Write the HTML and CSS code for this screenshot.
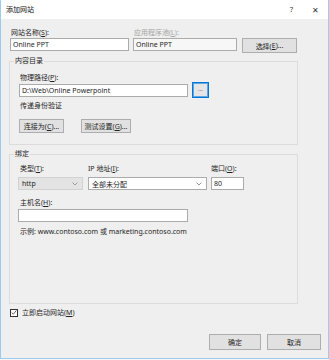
FILE: index.html
```html
<!DOCTYPE html>
<html lang="zh">
<head>
<meta charset="utf-8">
<title>添加网站</title>
<link rel="stylesheet" href="styles.css">
</head>
<body>
<div class="win">
  <div class="titlebar">
    <span class="title">添加网站</span>
    <span class="ctrls"><span class="help">?</span><span class="close">✕</span></span>
  </div>
  <div class="body">
    <div class="row1">
      <div class="field">
        <div class="lbl">网站名称(<u>S</u>):</div>
        <div class="input w-name">Online PPT</div>
      </div>
      <div class="field">
        <div class="lbl dis">应用程序池(<u>L</u>):</div>
        <div class="input ro w-pool">Online PPT</div>
      </div>
      <div class="btn b-select">选择(<u>E</u>)...</div>
    </div>

    <fieldset class="grp g1">
      <legend>内容目录</legend>
      <div class="lbl">物理路径(<u>P</u>):</div>
      <div class="pathrow">
        <div class="input w-path">D:\Web\Online Powerpoint</div>
        <div class="btn b-dots">...</div>
      </div>
      <div class="lbl l-auth">传递身份验证</div>
      <div class="btnrow">
        <div class="btn b-conn">连接为(<u>C</u>)...</div>
        <div class="btn b-test">测试设置(<u>G</u>)...</div>
      </div>
    </fieldset>

    <fieldset class="grp g2">
      <legend>绑定</legend>
      <div class="bindrow">
        <div class="field f-type">
          <div class="lbl">类型(<u>T</u>):</div>
          <div class="select s-type"><span>http</span><svg width="6" height="4" viewBox="0 0 6 4"><path d="M0.5 0.5 L3 3 L5.5 0.5" fill="none" stroke="#8a8a8a" stroke-width="0.8"/></svg></div>
        </div>
        <div class="field f-ip">
          <div class="lbl">IP 地址(<u>I</u>):</div>
          <div class="select s-ip"><span>全部未分配</span><svg width="6" height="4" viewBox="0 0 6 4"><path d="M0.5 0.5 L3 3 L5.5 0.5" fill="none" stroke="#7a7a7a" stroke-width="0.8"/></svg></div>
        </div>
        <div class="field f-port">
          <div class="lbl">端口(<u>O</u>):</div>
          <div class="input w-port">80</div>
        </div>
      </div>
      <div class="lbl l-host">主机名(<u>H</u>):</div>
      <div class="input w-host"></div>
      <div class="lbl l-ex">示例: www.contoso.com 或 marketing.contoso.com</div>
    </fieldset>

    <div class="chkrow">
      <span class="chk"><svg width="7" height="7" viewBox="0 0 7 7"><path d="M0.8 3.6 L2.7 5.5 L6.2 1.2" fill="none" stroke="#333" stroke-width="0.9"/></svg></span>
      <span class="lbl">立即启动网站(<u>M</u>)</span>
    </div>

    <div class="footer">
      <div class="btn b-ok">确定</div>
      <div class="btn b-cancel">取消</div>
    </div>
  </div>
</div>
</body>
</html>
```

FILE: styles.css
```css
* { box-sizing: border-box; }
html, body { margin: 0; padding: 0; }
body {
  background: #f4f6f8;
  font-family: "Noto Sans", "Noto Sans CJK SC", sans-serif;
  font-size: 7px;
  color: #1e1e1e;
}
u { text-decoration: underline; text-underline-offset: 1px; }

.win {
  width: 329px;
  height: 359px;
  background: #efefef;
  border-left: 1px solid #9ccbee;
  border-right: 1px solid #9ccbee;
  border-bottom: 1px solid #9ccbee;
  display: flex;
  flex-direction: column;
}

.titlebar {
  height: 19px;
  background: #ffffff;
  display: flex;
  align-items: center;
  justify-content: space-between;
  padding: 0 9px 0 5px;
  flex: none;
}
.title { font-size: 7px; line-height: 9px; color: #111; }
.ctrls { display: flex; align-items: center; gap: 19px; color: #333; }
.help { font-size: 7px; }
.close { font-size: 8px; }

.body {
  flex: 1;
  padding: 9px 0 0 8px;
  display: flex;
  flex-direction: column;
}

.lbl { line-height: 9px; white-space: nowrap; }
.dis { color: #a3a3a3; }

.input {
  height: 13px;
  background: #fff;
  border: 1px solid #ababab;
  line-height: 11px;
  padding: 0 2px;
  white-space: nowrap;
  overflow: hidden;
}
.ro { background: #f7f7f7; }

.btn {
  background: #e1e1e1;
  border: 1px solid #adadad;
  display: flex;
  align-items: center;
  justify-content: center;
  white-space: nowrap;
}

.row1 { display: flex; align-items: flex-start; margin-left: 1px; }
.row1 .field { display: flex; flex-direction: column; gap: 1px; }
.row1 .lbl { padding-left: 1px; }
.w-name { width: 119px; margin-right: 4px; }
.w-pool { width: 104px; margin-right: 5px; }
.b-select { width: 55px; height: 15px; margin-top: 10px; }

.grp {
  margin: 0;
  width: 289px;
  border: 1px solid #dcdcdc;
  min-width: 0;
}
.grp legend { padding: 0 1px; line-height: 8px; }

.g1 { margin-top: 4px; padding: 8px 8px 11px 9px; }
.g1 legend { margin-left: -5px; }
.g1 > .lbl { padding-left: 1px; }
.pathrow { display: flex; align-items: center; gap: 4px; height: 16px; }
.w-path { width: 169px; }
.b-dots {
  width: 17px; height: 16px;
  border: 1px solid #0078d7;
  box-shadow: inset 0 0 0 1px #5fa6e3;
  background: #e5e5e5;
  font-size: 6px;
  color: #555;
  padding-bottom: 2px;
}
.l-auth { margin-top: 3px; padding-left: 1px; }
.btnrow { display: flex; gap: 17px; margin-top: 9px; }
.b-conn { width: 45px; height: 14px; }
.b-test { width: 50px; height: 14px; }

.g2 { margin-top: 5px; padding: 6px 8px 67px 8px; }
.g2 legend { margin-left: -4px; }
.bindrow { display: flex; align-items: flex-start; }
.bindrow .field { display: flex; flex-direction: column; gap: 4px; }
.bindrow .lbl { padding-left: 2px; }
.f-ip .lbl, .f-port .lbl { padding-left: 0; }
.f-type { margin-right: 5px; }
.f-ip { margin-right: 4px; }

.select {
  height: 13px;
  display: flex;
  align-items: center;
  justify-content: space-between;
  padding: 0 4px 0 3px;
  border: 1px solid #c4c4c4;
}
.s-type { width: 65px; background: #e3e3e3; border-color: #d2d2d2; }
.s-ip { width: 119px; background: #fff; border-color: #ababab; }
.w-port { width: 33px; }

.l-host { margin-top: 8px; padding-left: 2px; }
.w-host { width: 170px; margin-top: 2px; }
.l-ex { margin-top: 5px; padding-left: 2px; }

.chkrow { display: flex; align-items: center; gap: 4px; margin-top: 4px; margin-left: 1px; }
.chk {
  width: 8px; height: 8px;
  border: 1px solid #333;
  background: #fff;
  display: flex; align-items: center; justify-content: center;
}

.footer {
  display: flex;
  justify-content: flex-end;
  gap: 6px;
  margin-top: 17px;
  padding-right: 7px;
}
.b-ok { width: 52px; height: 16px; }
.b-cancel { width: 54px; height: 16px; }
```
